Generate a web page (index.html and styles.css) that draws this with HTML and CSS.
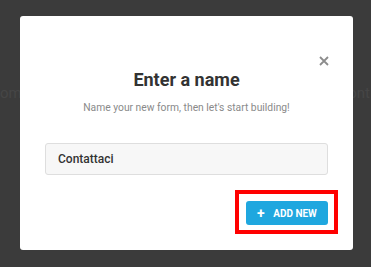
FILE: index.html
```html
<!DOCTYPE html>
<html lang="en">
<head>
    <meta charset="UTF-8">
    <title>Enter a name</title>
    <link rel="stylesheet" href="styles.css">
</head>
<body>

<div class="page">
    <div class="page-row">
        <span>om</span>
        <span>ont</span>
    </div>
</div>

<div class="overlay">
    <div class="modal">
        <button class="modal-close" aria-label="Close">
            <svg width="10" height="10" viewBox="0 0 10 10">
                <path d="M1 1 L9 9 M9 1 L1 9" stroke="#8c8c8c" stroke-width="1.8" fill="none"/>
            </svg>
        </button>
        <h2 class="modal-title">Enter a name</h2>
        <p class="modal-text">Name your new form, then let's start building!</p>
        <input class="modal-input" type="text" value="Contattaci">
        <div class="modal-actions">
            <button class="btn-add"><span class="plus">+</span> ADD NEW</button>
        </div>
    </div>
</div>

</body>
</html>
```

FILE: styles.css
```css
body {
    margin: 0;
    font-family: 'Roboto', 'Liberation Sans', sans-serif;
    background-color: #3b3b3b;
    width: 371px;
    height: 267px;
    overflow: hidden;
}

.page {
    padding-top: 84px;
}

.page-row {
    display: flex;
    justify-content: space-between;
    padding: 0 1px 0 0;
    font-size: 15px;
    color: #464646;
}

.overlay {
    position: absolute;
    top: 0;
    left: 0;
    right: 0;
    bottom: 0;
}

.modal {
    position: relative;
    margin: 16px 0 0 20px;
    width: 333px;
    height: 234px;
    box-sizing: border-box;
    padding: 53px 25px 0 25px;
    background-color: #fff;
    border-radius: 3px;
}

.modal-close {
    position: absolute;
    top: 40px;
    right: 24px;
    padding: 0;
    background: none;
    border: none;
    line-height: 0;
    cursor: pointer;
}

.modal-title {
    margin: 0;
    text-align: center;
    font-size: 18px;
    line-height: 22px;
    font-weight: 700;
    color: #333;
}

.modal-text {
    margin: 10px 0 0;
    text-align: center;
    font-size: 10.3px;
    line-height: 14px;
    color: #8a8a8a;
}

.modal-input {
    display: block;
    margin-top: 28px;
    width: 100%;
    height: 32px;
    box-sizing: border-box;
    padding: 0 12px;
    font-family: inherit;
    font-size: 12px;
    font-weight: 500;
    color: #333;
    background-color: #f7f7f7;
    border: 1px solid #dedede;
    border-radius: 3px;
}

.modal-actions {
    display: flex;
    justify-content: flex-end;
    margin-top: 26px;
}

.btn-add {
    position: relative;
    width: 82px;
    height: 24px;
    padding: 0;
    font-family: inherit;
    font-size: 10px;
    font-weight: 700;
    color: #fff;
    background-color: #1fa7df;
    border: none;
    border-radius: 3px;
    cursor: pointer;
}

.btn-add .plus {
    font-size: 14px;
    margin-right: 6px;
    vertical-align: -1px;
}

.btn-add::after {
    content: "";
    position: absolute;
    top: -11px;
    left: -11px;
    right: -10px;
    bottom: -9px;
    border: 4px solid #f00;
}
```
